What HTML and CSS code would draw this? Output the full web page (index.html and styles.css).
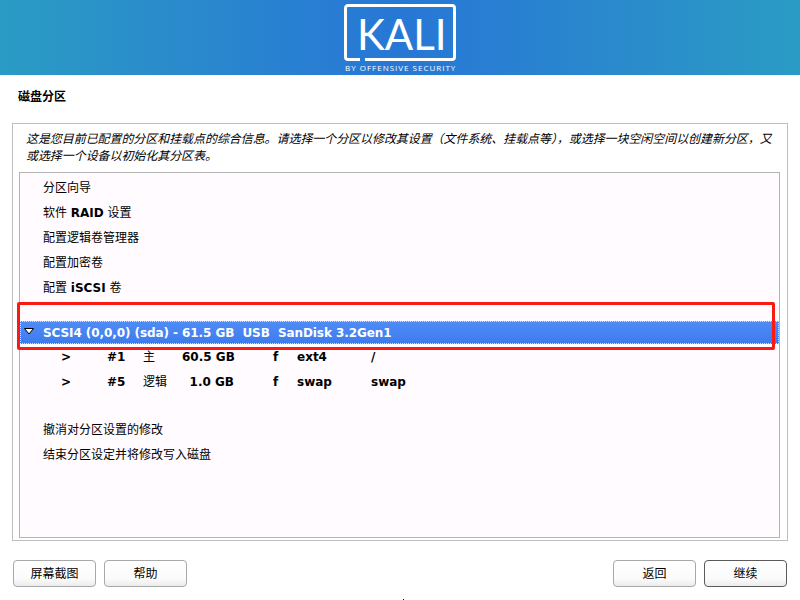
FILE: index.html
```html
<!DOCTYPE html>
<html lang="zh-CN">
<head>
    <meta charset="UTF-8">
    <title>磁盘分区</title>
    <link rel="stylesheet" href="styles.css">
</head>
<body>
    <header class="banner">
        <div class="logo">
            <svg class="logo-frame" width="112" height="58" viewBox="0 0 112 58">
                <path d="M16 55.500H4a2.500 2.500 0 0 1-2.500-2.500V4A2.500 2.500 0 0 1 4 1.500h104a2.500 2.500 0 0 1 2.500 2.500v49a2.500 2.500 0 0 1-2.500 2.500H21" fill="none" stroke="#fff" stroke-width="3"/>
            </svg>
            <span class="logo-name">KALI</span>
            <span class="logo-sub">BY OFFENSIVE SECURITY</span>
        </div>
    </header>

    <h1 class="page-title">磁盘分区</h1>

    <main class="panel">
        <p class="intro">这是您目前已配置的分区和挂载点的综合信息。请选择一个分区以修改其设置（文件系统、挂载点等），或选择一块空闲空间以创建新分区，又或选择一个设备以初始化其分区表。</p>
        <div class="list">
            <div class="row">分区向导</div>
            <div class="row">软件 <b>RAID</b> 设置</div>
            <div class="row">配置逻辑卷管理器</div>
            <div class="row">配置加密卷</div>
            <div class="row">配置 <b>iSCSI</b> 卷</div>
            <div class="gap-top"></div>
            <div class="row row-selected">
                <svg class="arrow" width="12" height="8" viewBox="0 0 12 8"><path d="M1.500 1.500h9L6 7z" fill="#fff" stroke="#000"/></svg>
                <b>SCSI4 (0,0,0) (sda) - 61.5 GB&nbsp; USB&nbsp; SanDisk 3.2Gen1</b>
            </div>
            <div class="row part">
                <b>&gt;</b><b>#1</b><span>主</span><b class="size">60.5 GB</b><b class="fs-flag">f</b><b>ext4</b><b>/</b>
            </div>
            <div class="row part">
                <b>&gt;</b><b>#5</b><span>逻辑</span><b class="size">1.0 GB</b><b class="fs-flag">f</b><b>swap</b><b>swap</b>
            </div>
            <div class="gap-bottom"></div>
            <div class="row">撤消对分区设置的修改</div>
            <div class="row">结束分区设定并将修改写入磁盘</div>
        </div>
    </main>

    <footer class="actions">
        <div class="btn-group">
            <button class="btn">屏幕截图</button>
            <button class="btn">帮助</button>
        </div>
        <div class="btn-group">
            <button class="btn">返回</button>
            <button class="btn btn-default">继续</button>
        </div>
    </footer>

    <div class="highlight"></div>
    <div class="cursor-dot"></div>
</body>
</html>
```

FILE: styles.css
```css
html, body {
    margin: 0;
    height: 100%;
}

body {
    position: relative;
    width: 800px;
    height: 600px;
    overflow: hidden;
    background: #ffffff;
    color: #000000;
    font-family: "DejaVu Sans", "Noto Sans CJK SC", sans-serif;
    font-size: 12px;
}

b {
    font-weight: bold;
}

.banner {
    height: 75px;
    display: flex;
    justify-content: center;
    background: linear-gradient(90deg, #2a9cc4 0%, #2a88cd 25%, #2777d6 50%, #2a88cd 75%, #2a9cc4 100%);
}

.logo {
    position: relative;
    width: 112px;
    height: 75px;
    color: #fff;
}

.logo-frame {
    position: absolute;
    left: 0;
    top: 4px;
}

.logo-name {
    position: absolute;
    left: 13px;
    top: 9px;
    font-family: "Lato", sans-serif;
    font-size: 42px;
    line-height: 50px;
}

.logo-sub {
    position: absolute;
    left: 1px;
    top: 62px;
    font-family: "Open Sans", sans-serif;
    font-size: 8px;
    line-height: 11px;
    letter-spacing: 1px;
    white-space: nowrap;
}

.page-title {
    margin: 0;
    padding: 15px 0 0 18px;
    height: 33px;
    font-size: 12px;
    line-height: 14px;
    font-weight: bold;
}

.panel {
    margin-left: 12px;
    width: 774px;
    height: 416px;
    border: 1px solid #bebebe;
}

.intro {
    margin: 0;
    padding: 7px 6px 0 13px;
    height: 41px;
    font-size: 12px;
    line-height: 17px;
    font-style: italic;
    letter-spacing: -0.07px;
}

.list {
    margin-left: 6px;
    width: 759px;
    height: 361px;
    border: 1px solid #b4b4b4;
    background: #fffbff;
    padding-top: 3px;
}

.row {
    height: 25px;
    line-height: 25px;
    padding-left: 23px;
    white-space: nowrap;
}

.gap-top {
    height: 20px;
}

.gap-bottom {
    height: 23px;
}

.row-selected {
    position: relative;
    height: 23px;
    margin-bottom: 1px;
    line-height: 24px;
    color: #fff;
    background: linear-gradient(180deg, #4f8cf5 0%, #4784f2 50%, #3c7bec 100%);
    outline: 1px dotted #d5e3fb;
    outline-offset: -1px;
    letter-spacing: -0.08px;
}

.arrow {
    position: absolute;
    left: 3px;
    top: 6px;
}

.part {
    display: grid;
    grid-template-columns: 46px 36px 39px 52px 39px 24px 74px 1fr;
    padding-left: 41px;
}

.part .size {
    text-align: right;
}

.part .fs-flag {
    grid-column: 6;
}

.actions {
    display: flex;
    justify-content: space-between;
    padding: 19px 13px 0;
}

.btn-group {
    display: flex;
    gap: 8px;
}

.btn {
    width: 83px;
    height: 27px;
    padding: 0 0 2px;
    border: 1px solid #a8a8a8;
    border-radius: 4px;
    background: linear-gradient(180deg, #ffffff 0%, #fbfbfb 70%, #ececec 100%);
    color: #000;
    font-family: inherit;
    font-size: 12px;
}

.btn-default {
    border-color: #5a5a5a;
}

.highlight {
    position: absolute;
    left: 17px;
    top: 302px;
    width: 752px;
    height: 42px;
    border: 3px solid #fb1a12;
    border-radius: 2px;
}

.cursor-dot {
    position: absolute;
    left: 403px;
    top: 599px;
    width: 1px;
    height: 1px;
    background: #000;
}
```
